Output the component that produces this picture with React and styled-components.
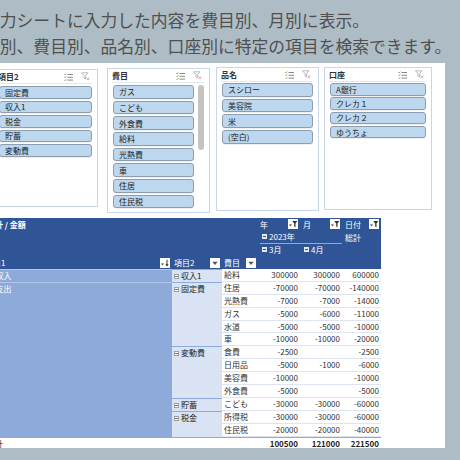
import React from 'react'
import styled, { createGlobalStyle } from 'styled-components'

const GlobalStyle = createGlobalStyle`
	html, body {
		margin: 0;
		padding: 0;
	}
	body {
		background: #adbcc5;
		font-family: "Noto Sans CJK JP", "Noto Sans", sans-serif;
	}
`

const Page = styled.div`
	width: 460px;
	height: 460px;
	overflow: hidden;
`

const Caption = styled.div`
	height: 63px;
	box-sizing: border-box;
	padding-top: 7px;
	overflow: hidden;
	white-space: nowrap;
	color: #505050;
	font-size: 16.8px;
	line-height: 26px;
`

const CaptionLine = styled.div`
	margin-left: -17px;
`

const Sheet = styled.div`
	width: 445px;
	height: 385px;
	box-sizing: border-box;
	padding-top: 4px;
	background: #fff;
	overflow: hidden;
`

const SlicerRow = styled.div`
	display: flex;
	align-items: flex-start;
	height: 151px;
`

const Slicer = styled.section`
	flex: none;
	display: flex;
	flex-direction: column;
	box-sizing: border-box;
	width: ${p => p.$w}px;
	height: ${p => p.$h}px;
	margin-left: ${p => p.$ml}px;
	margin-top: ${p => p.$mt}px;
	padding: 0 5px;
	border: 1px solid #c8d6e6;
	background: #fff;
	overflow: hidden;
`

const SlicerHead = styled.div`
	flex: none;
	display: flex;
	align-items: center;
	justify-content: space-between;
	box-sizing: border-box;
	height: 14px;
	margin-left: -1px;
	padding-right: 2px;
	border-bottom: 1px solid #e2e8f0;
	font-size: 8px;
	font-weight: 700;
	color: #333;
`

const HeadIcons = styled.div`
	display: flex;
	align-items: center;
	gap: 8px;
`

const SlicerBody = styled.div`
	flex: 1;
	display: flex;
	gap: 4px;
	min-height: 0;
	padding-top: ${p => p.$pt}px;
`

const ItemList = styled.div`
	flex: 1;
	display: flex;
	flex-direction: column;
	gap: ${p => p.$gap}px;
`

const Item = styled.div`
	flex: none;
	display: flex;
	align-items: center;
	box-sizing: border-box;
	height: ${p => p.$h}px;
	padding-left: 5px;
	background: #bdd7ee;
	border: 1px solid #8d9db1;
	border-radius: 3px;
	box-shadow: 0 1px 0 rgba(0, 0, 0, 0.06);
	font-size: 8px;
	color: #222;
	white-space: nowrap;
`

const Scrollbar = styled.div`
	flex: none;
	width: 6px;
`

const Thumb = styled.div`
	height: 65px;
	border-radius: 3px;
	background: #c4c4c4;
`

const COLS = '189px 50px 36px 42px 42px 39px'

const Pivot = styled.div`
	width: 398px;
	margin-left: -17px;
	font-size: 8px;
	white-space: nowrap;
`

const PivotHead = styled.div`
	display: grid;
	grid-template-columns: ${COLS};
	grid-template-rows: repeat(4, 12.75px);
	background: #2f5597;
	color: #fff;
`

const HeadCell = styled.div`
	grid-column: ${p => p.$col};
	grid-row: ${p => p.$row};
	display: flex;
	align-items: center;
	justify-content: space-between;
	gap: 3px;
	padding: 0 2px 0 ${p => p.$pl || 2}px;
	font-weight: ${p => (p.$bold ? 700 : 400)};
	overflow: hidden;
`

const Label = styled.span`
	display: flex;
	align-items: center;
	gap: 2px;
`

const YearCell = styled(HeadCell)`
	margin-left: 2px;
	padding-left: 2px;
	border-bottom: 1px solid #8eaadb;
	justify-content: flex-start;
`

const HeadBtn = styled.span`
	flex: none;
	display: flex;
	width: 10px;
	height: 10px;
	background: #fff;
`

const Toggle = styled.span`
	position: relative;
	flex: none;
	width: 5px;
	height: 5px;
	box-sizing: border-box;
	border: 1px solid ${p => (p.$light ? '#e6ecf6' : '#a0a0a0')};
	background: ${p => (p.$light ? '#dfe6f3' : '#fff')};

	&::after {
		content: '';
		position: absolute;
		left: 0;
		right: 0;
		top: 1px;
		height: 1px;
		background: ${p => (p.$light ? '#2f5597' : '#777')};
	}
`

const PivotBody = styled.div`
	display: grid;
	grid-template-columns: ${COLS};
	grid-auto-rows: 12.9px;
	line-height: 12px;
`

const GroupCell = styled.div`
	grid-column: 1;
	grid-row: span ${p => p.$span};
	padding-left: 12.5px;
	background: #8eaadb;
	border-top: 1px solid #b4c6e7;
	color: #fff;
`

const SubGroupCell = styled.div`
	grid-column: 2;
	grid-row: span ${p => p.$span};
	display: flex;
	align-items: flex-start;
	gap: 2px;
	padding: 0 0 0 2px;
	background: #dae3f3;
	border-top: 1px solid #8eaadb;
	color: #222;

	${Toggle} {
		margin-top: 4px;
	}
`

const NameCell = styled.div`
	padding-left: 2px;
	border-bottom: 1px solid #dde5f2;
	color: #333;
`

const NumCell = styled.div`
	padding-right: 2px;
	text-align: right;
	border-bottom: 1px solid #dde5f2;
	color: #333;
`

const TotalCell = styled.div`
	padding: 0 2px 0 ${p => p.$pl || 0}px;
	text-align: ${p => (p.$num ? 'right' : 'left')};
	border-top: 1.5px solid #8eaadb;
	font-weight: ${p => (p.$num ? 700 : 400)};
	color: #222;
	grid-column: ${p => p.$col || 'auto'};
`

const MultiSelectIcon = () => (
	<svg width="9" height="8" viewBox="0 0 9 8">
		<g fill="none" strokeWidth="0.9">
			<path d="M0.3 1.3 l0.8 0.8 l1.2 -1.6" stroke="#7fb069" />
			<path d="M0.3 4.1 l0.8 0.8 l1.2 -1.6" stroke="#7fb069" />
			<path d="M0.3 6.9 l0.8 0.8 l1.2 -1.6" stroke="#7fb069" />
			<path d="M3.5 1.5 H9 M3.5 4.3 H9 M3.5 7.1 H9" stroke="#7a7a7a" />
		</g>
	</svg>
)

const ClearFilterIcon = () => (
	<svg width="9" height="9" viewBox="0 0 9 9">
		<path d="M0.5 0.8 H7 L4.6 3.6 V7 L3 6 V3.6 Z" fill="none" stroke="#a8a8a8" strokeWidth="0.8" />
		<path d="M5.6 5.4 L8.4 8.2 M8.4 5.4 L5.6 8.2" stroke="#d9a0a0" strokeWidth="0.9" />
	</svg>
)

const FilterGlyph = () => (
	<svg width="10" height="10" viewBox="0 0 10 10">
		<path d="M1 5.5 H4 L2.5 7.3 Z" fill="#333" />
		<path d="M4.3 2 H9.3 L7.5 4.4 V8.2 L6.2 7.4 V4.4 Z" fill="#333" />
	</svg>
)

const SortGlyph = () => (
	<svg width="10" height="10" viewBox="0 0 10 10">
		<path d="M1 5.5 H4 L2.5 7.3 Z" fill="#333" />
		<path d="M7 1.8 V7.5" stroke="#333" strokeWidth="1" />
		<path d="M5.3 6.2 L7 8.6 L8.7 6.2 Z" fill="#333" />
	</svg>
)

const DropGlyph = () => (
	<svg width="10" height="10" viewBox="0 0 10 10">
		<path d="M2.3 3.8 H7.7 L5 6.9 Z" fill="#555" />
	</svg>
)

const slicers = [
	{ title: '項目2', items: ['固定費', '収入1', '税金', '貯蓄', '変動費'], w: 105, h: 138, ml: -7, mt: 2, ih: 12.5, gap: 2, pt: 2 },
	{ title: '費目', items: ['ガス', 'こども', '外食費', '給料', '光熱費', '車', '住居', '住民税'], w: 103, h: 145, ml: 9, mt: 1, ih: 13.5, gap: 2.2, pt: 2, scroll: true },
	{ title: '品名', items: ['スシロー', '美容院', '米', '(空白)'], w: 103, h: 144, ml: 6, mt: 0, ih: 13.5, gap: 2.2, pt: 1 },
	{ title: '口座', items: ['A銀行', 'クレカ１', 'クレカ２', 'ゆうちょ'], w: 108, h: 143, ml: 5, mt: 0, ih: 12.5, gap: 1.8, pt: 1 },
]

const rows = [
	{ g1: '収入', g1span: 1, g2: '収入1', g2span: 1, name: '給料', v: [300000, 300000, 600000] },
	{ g1: '支出', g1span: 12, g2: '固定費', g2span: 5, name: '住居', v: [-70000, -70000, -140000] },
	{ name: '光熱費', v: [-7000, -7000, -14000] },
	{ name: 'ガス', v: [-5000, -6000, -11000] },
	{ name: '水道', v: [-5000, -5000, -10000] },
	{ name: '車', v: [-10000, -10000, -20000] },
	{ g2: '変動費', g2span: 4, name: '食費', v: [-2500, null, -2500] },
	{ name: '日用品', v: [-5000, -1000, -6000] },
	{ name: '美容費', v: [-10000, null, -10000] },
	{ name: '外食費', v: [-5000, null, -5000] },
	{ g2: '貯蓄', g2span: 1, name: 'こども', v: [-30000, -30000, -60000] },
	{ g2: '税金', g2span: 2, name: '所得税', v: [-30000, -30000, -60000] },
	{ name: '住民税', v: [-20000, -20000, -40000] },
]

const totals = [100500, 121000, 221500]

function SlicerBox({ s }) {
	return (
		<Slicer $w={s.w} $h={s.h} $ml={s.ml} $mt={s.mt}>
			<SlicerHead>
				<span>{s.title}</span>
				<HeadIcons>
					<MultiSelectIcon />
					<ClearFilterIcon />
				</HeadIcons>
			</SlicerHead>
			<SlicerBody $pt={s.pt}>
				<ItemList $gap={s.gap}>
					{s.items.map(item => (
						<Item key={item} $h={s.ih}>
							{item}
						</Item>
					))}
				</ItemList>
				{s.scroll && (
					<Scrollbar>
						<Thumb />
					</Scrollbar>
				)}
			</SlicerBody>
		</Slicer>
	)
}

export default function App() {
	return (
		<Page>
			<GlobalStyle />
			<Caption>
				<CaptionLine>入力シートに入力した内容を費目別、月別に表示。</CaptionLine>
				<CaptionLine>月別、費目別、品名別、口座別に特定の項目を検索できます。</CaptionLine>
			</Caption>
			<Sheet>
				<SlicerRow>
					{slicers.map(s => (
						<SlicerBox key={s.title} s={s} />
					))}
				</SlicerRow>
				<Pivot>
					<PivotHead>
						<HeadCell $col="1 / 4" $row="1" $pl={4} $bold>
							合計 / 金額
						</HeadCell>
						<HeadCell $col="4" $row="1">
							年
							<HeadBtn>
								<FilterGlyph />
							</HeadBtn>
						</HeadCell>
						<HeadCell $col="5" $row="1" $pl={3}>
							月
							<HeadBtn>
								<FilterGlyph />
							</HeadBtn>
						</HeadCell>
						<HeadCell $col="6" $row="1" $pl={3}>
							日付
							<HeadBtn>
								<FilterGlyph />
							</HeadBtn>
						</HeadCell>
						<YearCell $col="4 / 6" $row="2">
							<Label>
								<Toggle $light />
								2023年
							</Label>
						</YearCell>
						<HeadCell $col="6" $row="2" $pl={3}>
							総計
						</HeadCell>
						<HeadCell $col="4" $row="3" $pl={4}>
							<Label>
								<Toggle $light />
								3月
							</Label>
						</HeadCell>
						<HeadCell $col="5" $row="3" $pl={4}>
							<Label>
								<Toggle $light />
								4月
							</Label>
						</HeadCell>
						<HeadCell $col="1" $row="4">
							項目1
							<HeadBtn>
								<SortGlyph />
							</HeadBtn>
						</HeadCell>
						<HeadCell $col="2" $row="4">
							項目2
							<HeadBtn>
								<DropGlyph />
							</HeadBtn>
						</HeadCell>
						<HeadCell $col="3" $row="4">
							費目
							<HeadBtn>
								<DropGlyph />
							</HeadBtn>
						</HeadCell>
					</PivotHead>
					<PivotBody>
						{rows.map(r => (
							<React.Fragment key={r.name}>
								{r.g1 && <GroupCell $span={r.g1span}>{r.g1}</GroupCell>}
								{r.g2 && (
									<SubGroupCell $span={r.g2span}>
										<Toggle />
										{r.g2}
									</SubGroupCell>
								)}
								<NameCell>{r.name}</NameCell>
								{r.v.map((n, i) => (
									<NumCell key={i}>{n === null ? '' : n}</NumCell>
								))}
							</React.Fragment>
						))}
						<TotalCell $col="1 / 4" $pl={4}>
							総計
						</TotalCell>
						{totals.map((n, i) => (
							<TotalCell key={i} $num>
								{n}
							</TotalCell>
						))}
					</PivotBody>
				</Pivot>
			</Sheet>
		</Page>
	)
}
